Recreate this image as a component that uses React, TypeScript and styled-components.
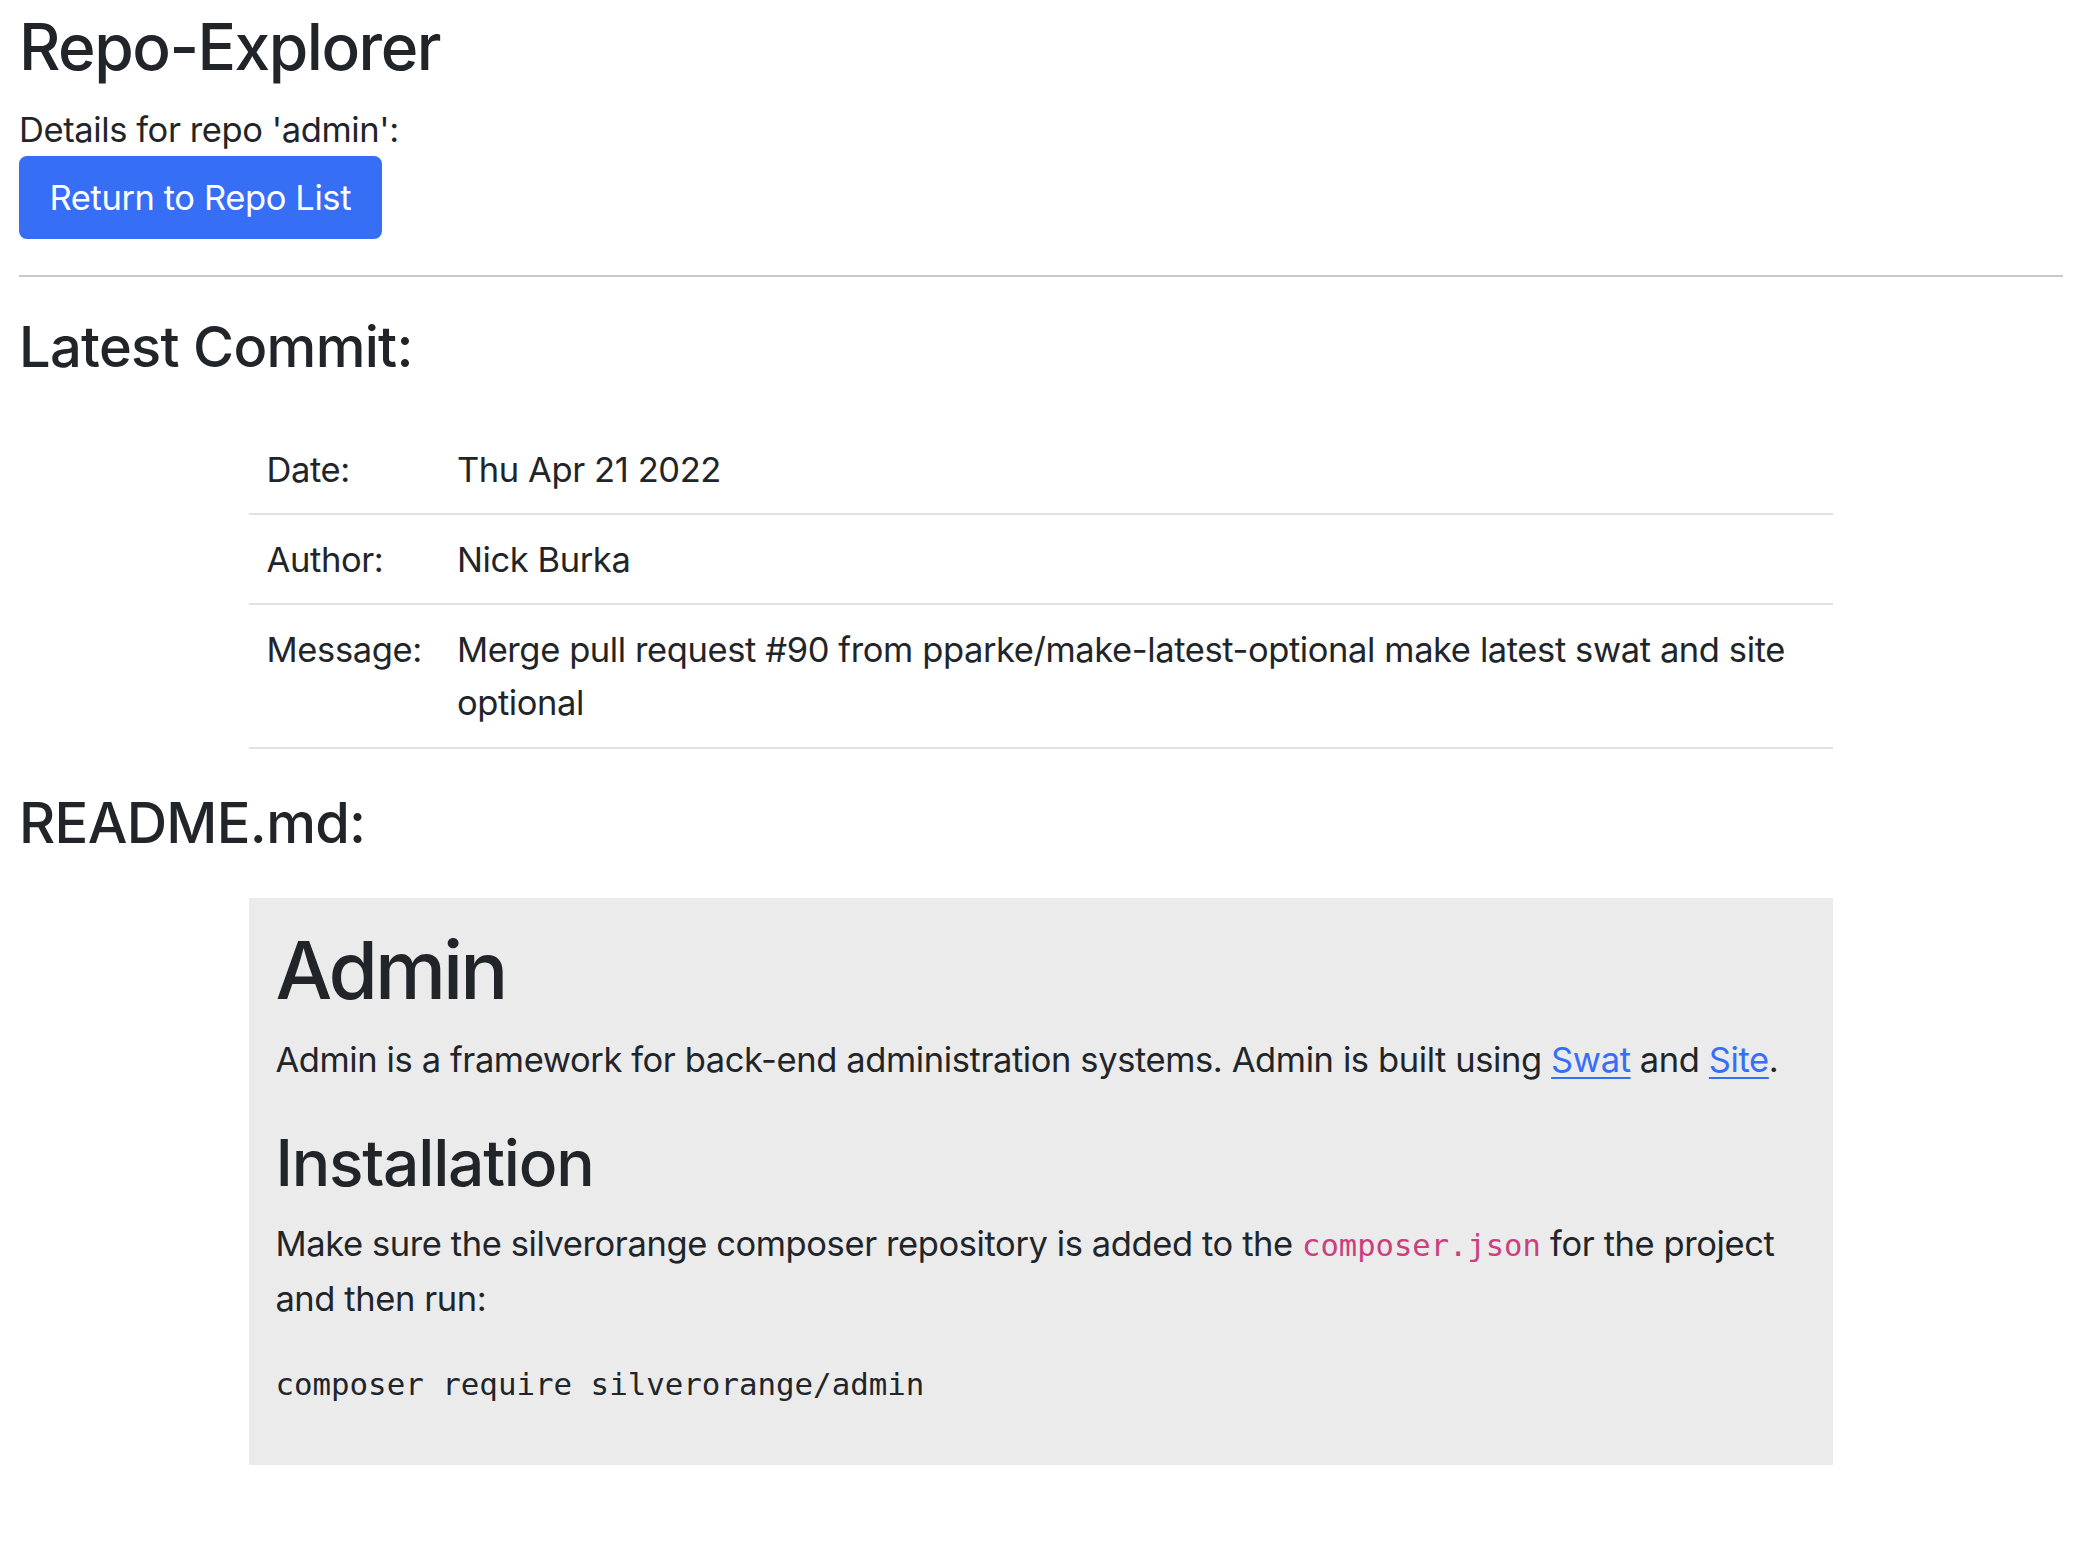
import React from "react";
import styled, { createGlobalStyle } from "styled-components";

const GlobalStyle = createGlobalStyle`
  html, body {
    margin: 0;
    padding: 0;
    background: #ffffff;
  }
  body {
    font-family: Inter, "Noto Sans", "Liberation Sans", sans-serif;
    font-size: 34.5px;
    line-height: 53px;
    letter-spacing: -0.4px;
    color: #212529;
    -webkit-font-smoothing: antialiased;
  }
  * { box-sizing: border-box; }
`;

const Page = styled.main`
  padding: 8px 21px 40px 19px;
  display: flex;
  flex-direction: column;
  align-items: stretch;
`;

const Title = styled.h1`
  margin: 0 0 17px;
  font-size: 64px;
  line-height: 78px;
  font-weight: 500;
  letter-spacing: -1.5px;
`;

const Lead = styled.div`
  font-size: 34.5px;
  line-height: 53px;
`;

const PrimaryButton = styled.button`
  align-self: flex-start;
  font-family: inherit;
  font-size: 34.5px;
  line-height: 53px;
  letter-spacing: -0.4px;
  font-weight: 400;
  color: #ffffff;
  background: #366ff6;
  border: 2px solid #366ff6;
  border-radius: 8px;
  padding: 13px 28.5px;
  cursor: pointer;
`;

const Divider = styled.hr`
  margin: 36px 0 35px;
  border: 0;
  height: 2px;
  background: #c8c9ca;
`;

const SectionTitle = styled.h3<{ $gapBelow: number }>`
  margin: 0 0 ${(p) => p.$gapBelow}px;
  font-size: 56px;
  line-height: 70px;
  font-weight: 500;
  letter-spacing: -0.7px;
`;

const Container = styled.section<{ $gapBelow: number }>`
  width: 1584px;
  max-width: 100%;
  align-self: center;
  margin-bottom: ${(p) => p.$gapBelow}px;
`;

const CommitTable = styled.table`
  width: 100%;
  border-collapse: collapse;
`;

const Row = styled.tr`
  border-bottom: 2.2px solid #dee2e6;
`;

const Cell = styled.td<{ $label?: boolean }>`
  padding: 17.6px 17.6px;
  vertical-align: top;
  white-space: ${(p) => (p.$label ? "nowrap" : "normal")};
  width: ${(p) => (p.$label ? "1%" : "auto")};
`;

const ReadmeBox = styled.article`
  background: #ebebeb;
  padding: 24px 26.4px 22.6px;
`;

const ReadmeH1 = styled.h1`
  margin: 0 0 15px;
  font-size: 80px;
  line-height: 96px;
  font-weight: 500;
  letter-spacing: -3px;
`;

const ReadmeH2 = styled.h2`
  margin: 0 0 16.7px;
  font-size: 64px;
  line-height: 77px;
  font-weight: 500;
  letter-spacing: -1.2px;
`;

const Para = styled.p<{ $gapBelow: number }>`
  margin: 0 0 ${(p) => p.$gapBelow}px;
`;

const Link = styled.a`
  color: #366ff6;
  text-decoration: underline;
  text-underline-offset: 5px;
  text-decoration-thickness: 2px;
`;

const InlineCode = styled.code`
  font-family: "DejaVu Sans Mono", "Liberation Mono", monospace;
  font-size: 30.5px;
  letter-spacing: 0;
  color: #c9407f;
`;

const CodeBlock = styled.pre`
  margin: 0 0 35.2px;
  font-family: "DejaVu Sans Mono", "Liberation Mono", monospace;
  font-size: 30.8px;
  line-height: 46.2px;
  letter-spacing: 0;
  color: #212529;
`;

const commit = [
  { label: "Date:", value: "Thu Apr 21 2022" },
  { label: "Author:", value: "Nick Burka" },
  {
    label: "Message:",
    value:
      "Merge pull request #90 from pparke/make-latest-optional make latest swat and site optional",
  },
];

export default function App() {
  return (
    <>
      <GlobalStyle />
      <Page>
        <Title>Repo-Explorer</Title>
        <Lead>Details for repo 'admin':</Lead>
        <PrimaryButton type="button">Return to Repo List</PrimaryButton>
        <Divider />
        <SectionTitle $gapBelow={43}>Latest Commit:</SectionTitle>
        <Container $gapBelow={39}>
          <CommitTable>
            <tbody>
              {commit.map((c) => (
                <Row key={c.label}>
                  <Cell $label>{c.label}</Cell>
                  <Cell>{c.value}</Cell>
                </Row>
              ))}
            </tbody>
          </CommitTable>
        </Container>
        <SectionTitle $gapBelow={40}>README.md:</SectionTitle>
        <Container $gapBelow={0}>
          <ReadmeBox>
            <ReadmeH1>Admin</ReadmeH1>
            <Para $gapBelow={38}>
              Admin is a framework for back-end administration systems. Admin is
              built using <Link href="#">Swat</Link> and <Link href="#">Site</Link>.
            </Para>
            <ReadmeH2>Installation</ReadmeH2>
            <Para $gapBelow={35.6}>
              Make sure the silverorange composer repository is added to the{" "}
              <InlineCode>composer.json</InlineCode> for the project and then run:
            </Para>
            <CodeBlock>composer require silverorange/admin</CodeBlock>
          </ReadmeBox>
        </Container>
      </Page>
    </>
  );
}
